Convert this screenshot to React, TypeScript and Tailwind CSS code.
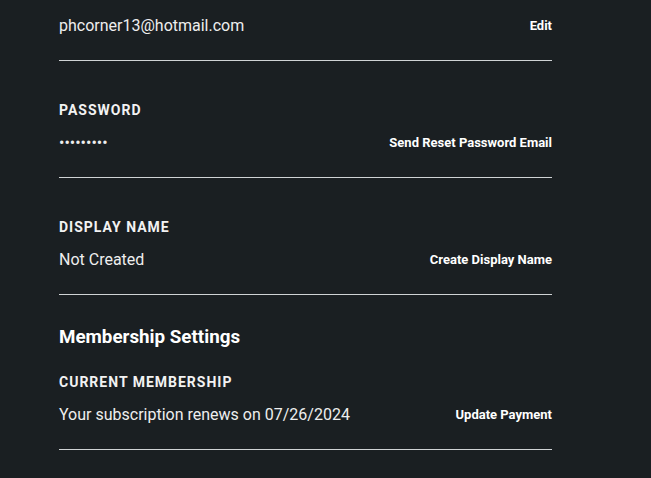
import React from "react";

const font = { fontFamily: "Roboto, 'Noto Sans', sans-serif" };

function Label({ children }: { children: React.ReactNode }) {
  return (
    <div className="text-[14px] leading-[16px] font-bold tracking-[1px] text-[#f2f2f2]">
      {children}
    </div>
  );
}

function Row({ value, action }: { value: React.ReactNode; action: string }) {
  return (
    <div className="flex items-center justify-between h-[24px]">
      <div className="text-[16px] leading-[24px] text-[#eeeeee]">{value}</div>
      <button className="text-[13px] leading-[24px] font-bold text-white">{action}</button>
    </div>
  );
}

export default function App() {
  return (
    <div className="min-h-[478px] w-full bg-[#1a1f22]" style={font}>
      <div className="ml-[59px] w-[493px]">
        <div className="pt-[14px] pb-[22px] border-b border-[#cfd3d5]">
          <Row value="phcorner13@hotmail.com" action="Edit" />
        </div>
        <div className="pt-[41px] pb-[22px] border-b border-[#cfd3d5]">
          <Label>PASSWORD</Label>
          <div className="mt-[13px]">
            <Row value="•••••••••" action="Send Reset Password Email" />
          </div>
        </div>
        <div className="pt-[41px] pb-[22px] border-b border-[#cfd3d5]">
          <Label>DISPLAY NAME</Label>
          <div className="mt-[13px]">
            <Row value="Not Created" action="Create Display Name" />
          </div>
        </div>
        <div className="pt-[28px] pb-[22px] border-b border-[#cfd3d5]">
          <h2 className="text-[18.8px] leading-[28px] font-bold text-white">Membership Settings</h2>
          <div className="mt-[23px]">
            <Label>CURRENT MEMBERSHIP</Label>
          </div>
          <div className="mt-[13px]">
            <Row value="Your subscription renews on 07/26/2024" action="Update Payment" />
          </div>
        </div>
      </div>
    </div>
  );
}
